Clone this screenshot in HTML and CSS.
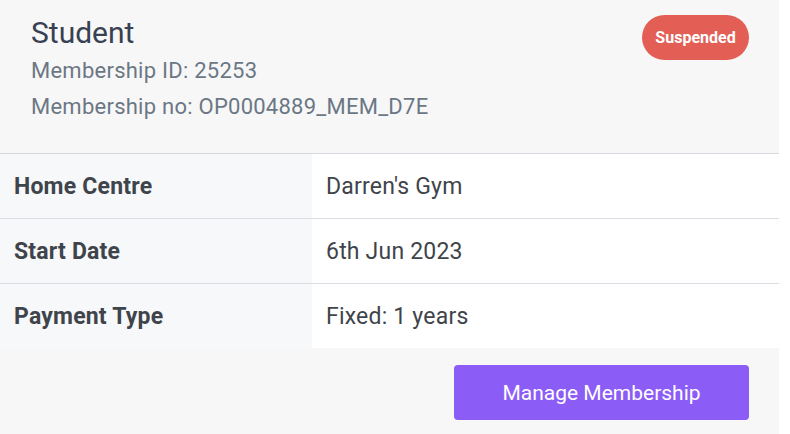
FILE: index.html
```html
<!DOCTYPE html>
<html>
<head>
<meta charset="utf-8">
<link rel="stylesheet" href="styles.css">
</head>
<body>
<div class="card">
  <div class="header">
    <div class="info">
      <div class="title">Student</div>
      <div class="sub">Membership ID: 25253</div>
      <div class="sub">Membership no: OP0004889_MEM_D7E</div>
    </div>
    <span class="badge">Suspended</span>
  </div>
  <div class="table">
    <div class="row">
      <div class="label">Home Centre</div>
      <div class="value">Darren's Gym</div>
    </div>
    <div class="row">
      <div class="label">Start Date</div>
      <div class="value">6th Jun 2023</div>
    </div>
    <div class="row">
      <div class="label">Payment Type</div>
      <div class="value">Fixed: 1 years</div>
    </div>
  </div>
  <div class="footer">
    <button class="btn">Manage Membership</button>
  </div>
</div>
</body>
</html>
```

FILE: styles.css
```css
* { box-sizing: border-box; }
html, body { margin: 0; padding: 0; background: #ffffff; }
body { font-family: Roboto, "Liberation Sans", sans-serif; }
.card {
  width: 779px;
  height: 434px;
  background: #f7f7f7;
}
.header {
  display: flex;
  justify-content: space-between;
  align-items: flex-start;
  padding: 13px 30px 0 31px;
  box-sizing: content-box;
  height: 140px;
  border-bottom: 1px solid #d5d8de;
}
.title {
  font-size: 30px;
  line-height: 40px;
  color: #374151;
}
.sub {
  font-size: 22px;
  line-height: 36px;
  letter-spacing: 0.25px;
  color: #6b7785;
}
.badge {
  margin-top: 2px;
  width: 107px;
  height: 45px;
  border-radius: 23px;
  background: #e35e55;
  color: #ffffff;
  font-weight: 700;
  font-size: 16px;
  display: flex;
  align-items: center;
  justify-content: center;
}
.table { display: flex; flex-direction: column; }
.row {
  display: grid;
  grid-template-columns: 312px 1fr;
  height: 65px;
  border-bottom: 1px solid #d9dee5;
}
.row:last-child { border-bottom: none; height: 64px; }
.label,
.value {
  font-size: 23px;
  letter-spacing: 0.2px;
  color: #3f444b;
  padding-left: 14px;
  display: flex;
  align-items: center;
}
.label {
  background: #f6f8fa;
  font-weight: 700;
}
.value {
  background: #ffffff;
}
.footer {
  display: flex;
  justify-content: flex-end;
  padding: 17px 30px 0 0;
}
.btn {
  width: 295px;
  height: 55px;
  border: none;
  border-radius: 4px;
  background: #8b5cf6;
  color: #ffffff;
  font-family: Roboto, "Liberation Sans", sans-serif;
  font-size: 21px;
  font-weight: 400;
}
```
